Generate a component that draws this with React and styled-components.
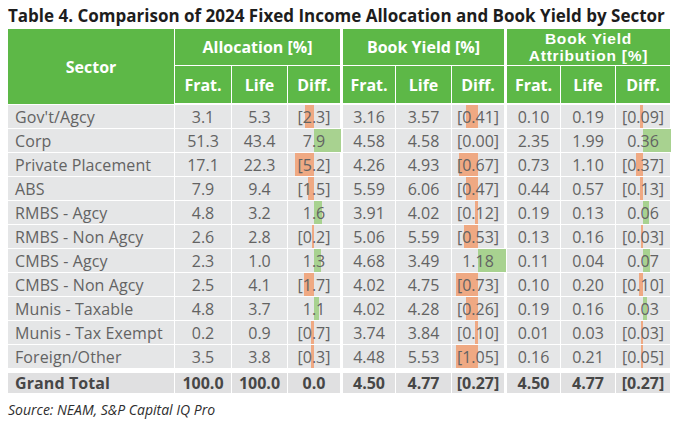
import React from 'react';
import styled, { createGlobalStyle } from 'styled-components';

const GlobalStyle = createGlobalStyle`
  html, body {
    margin: 0;
    padding: 0;
    background: #fff;
  }
  body {
    font-family: "Open Sans", "Liberation Sans", sans-serif;
  }
`;

const GREEN = '#5db847';

const Page = styled.div`
  width: 681px;
  height: 421px;
  padding: 4px 8px 0 8px;
  box-sizing: border-box;
  overflow: hidden;
`;

const Title = styled.h1`
  margin: 0;
  height: 25px;
  font-size: 17px;
  line-height: 24px;
  font-weight: 700;
  color: #1d1d1d;
  white-space: nowrap;
`;

const Header = styled.div`
  display: flex;
  gap: 1px;
  height: 75px;
`;

const SectorHead = styled.div`
  width: 166px;
  background: ${GREEN};
  color: #fff;
  font-weight: 700;
  font-size: 16px;
  display: flex;
  align-items: center;
  justify-content: center;
`;

const HeadGroup = styled.div`
  width: ${p => p.$w}px;
  margin-left: ${p => (p.$first ? 0 : 2)}px;
  display: flex;
  flex-direction: column;
  gap: 1px;
`;

const GroupTitle = styled.div`
  height: 36px;
  background: ${GREEN};
  color: #fff;
  font-weight: 700;
  font-size: 16px;
  text-align: center;
  display: flex;
  flex-direction: column;
  align-items: center;
  justify-content: center;
`;

/* tighter face for the two-line title so the lines sit close like the original */
const TitleLine = styled.div`
  font-family: ${p => (p.$tight ? '"Liberation Sans", Arial, sans-serif' : 'inherit')};
  font-size: ${p => (p.$tight ? 15.5 : 16)}px;
  letter-spacing: ${p => (p.$tight ? 0.8 : 0)}px;
  line-height: ${p => (p.$tight ? 17 : 22)}px;
  white-space: nowrap;
`;

const SubRow = styled.div`
  display: flex;
  gap: 1px;
  height: 37px;
`;

const SubHead = styled.div`
  width: ${p => p.$w}px;
  background: ${GREEN};
  color: #fff;
  font-weight: 700;
  font-size: 16px;
  display: flex;
  align-items: center;
  justify-content: center;
`;

const Body = styled.div`
  margin-top: 1px;
  display: flex;
  flex-direction: column;
  gap: 1px;
`;

const Row = styled.div`
  display: flex;
  gap: 1px;
  height: ${p => (p.$total ? 20 : 23)}px;
  margin-top: ${p => (p.$total ? 4 : 0)}px;
`;

const SectorCell = styled.div`
  width: 166px;
  box-sizing: border-box;
  padding-left: 7px;
  background: ${p => (p.$total ? '#e0e0e1' : '#e5e6e7')};
  color: ${p => (p.$total ? '#474747' : '#636363')};
  font-weight: ${p => (p.$total ? 700 : 400)};
  font-size: 16px;
  letter-spacing: 0.1px;
  display: flex;
  align-items: center;
  white-space: nowrap;
`;

const Group = styled.div`
  display: flex;
  gap: 1px;
  margin-left: ${p => (p.$first ? 0 : 2)}px;
`;

const Cell = styled.div`
  position: relative;
  width: ${p => p.$w}px;
  background: ${p => (p.$total ? '#e0e0e1' : '#e5e6e7')};
  color: ${p => (p.$total ? '#474747' : '#636363')};
  font-weight: ${p => (p.$total ? 700 : 400)};
  font-size: 16px;
  display: flex;
  align-items: center;
  justify-content: center;
  white-space: nowrap;
`;

const Bar = styled.div`
  position: absolute;
  top: 0;
  bottom: 0;
  background: ${p => (p.$neg ? '#efa983' : '#a8d290')};
`;

const CellText = styled.span`
  position: relative;
`;

const Source = styled.div`
  margin-top: 8px;
  font-size: 14px;
  line-height: 18px;
  font-style: italic;
  color: #2e2e2e;
`;

const groups = [
  { title: 'Allocation [%]', widths: [56, 55, 52] },
  { title: 'Book Yield [%]', widths: [52, 55, 52] },
  { title: 'Book Yield\nAttribution [%]', widths: [53, 54, 54] },
];

const rows = [
  ["Gov't/Agcy", ['3.1', '5.3', '[2.3]', -9], ['3.16', '3.57', '[0.41]', -12], ['0.10', '0.19', '[0.09]', -3]],
  ['Corp', ['51.3', '43.4', '7.9', 27], ['4.58', '4.58', '[0.00]', 0], ['2.35', '1.99', '0.36', 28]],
  ['Private Placement', ['17.1', '22.3', '[5.2]', -19], ['4.26', '4.93', '[0.67]', -19], ['0.73', '1.10', '[0.37]', -7]],
  ['ABS', ['7.9', '9.4', '[1.5]', -6], ['5.59', '6.06', '[0.47]', -12], ['0.44', '0.57', '[0.13]', -3]],
  ['RMBS - Agcy', ['4.8', '3.2', '1.6', 8], ['3.91', '4.02', '[0.12]', -3], ['0.19', '0.13', '0.06', 6]],
  ['RMBS - Non Agcy', ['2.6', '2.8', '[0.2]', -2], ['5.06', '5.59', '[0.53]', -14], ['0.13', '0.16', '[0.03]', -2]],
  ['CMBS - Agcy', ['2.3', '1.0', '1.3', 7], ['4.68', '3.49', '1.18', 28], ['0.11', '0.04', '0.07', 7]],
  ['CMBS - Non Agcy', ['2.5', '4.1', '[1.7]', -10], ['4.02', '4.75', '[0.73]', -22], ['0.10', '0.20', '[0.10]', -4]],
  ['Munis - Taxable', ['4.8', '3.7', '1.1', 5], ['4.02', '4.28', '[0.26]', -12], ['0.19', '0.16', '0.03', 4]],
  ['Munis - Tax Exempt', ['0.2', '0.9', '[0.7]', -3], ['3.74', '3.84', '[0.10]', -3], ['0.01', '0.03', '[0.03]', -2]],
  ['Foreign/Other', ['3.5', '3.8', '[0.3]', -3], ['4.48', '5.53', '[1.05]', -22], ['0.16', '0.21', '[0.05]', -2]],
];

const total = ['Grand Total', ['100.0', '100.0', '0.0'], ['4.50', '4.77', '[0.27]'], ['4.50', '4.77', '[0.27]']];

function DiffBar({ size }) {
  if (!size) return null;
  const neg = size < 0;
  const w = Math.abs(size);
  return (
    <Bar
      $neg={neg}
      style={neg ? { right: '50%', width: w } : { left: '50%', width: w }}
    />
  );
}

function DataRow({ data, isTotal }) {
  const [name, ...vals] = data;
  return (
    <Row $total={isTotal}>
      <SectorCell $total={isTotal}>{name}</SectorCell>
      {vals.map((g, gi) => (
        <Group key={gi} $first={gi === 0}>
          {[0, 1, 2].map(ci => (
            <Cell key={ci} $w={groups[gi].widths[ci]} $total={isTotal}>
              {ci === 2 && !isTotal && <DiffBar size={g[3]} />}
              <CellText>{g[ci]}</CellText>
            </Cell>
          ))}
        </Group>
      ))}
    </Row>
  );
}

export default function App() {
  return (
    <>
      <GlobalStyle />
      <Page>
        <Title>Table 4. Comparison of 2024 Fixed Income Allocation and Book Yield by Sector</Title>
        <Header>
          <SectorHead>Sector</SectorHead>
          {groups.map((g, gi) => {
            const lines = g.title.split('\n');
            return (
              <HeadGroup key={gi} $first={gi === 0} $w={g.widths.reduce((a, b) => a + b, 0) + 2}>
                <GroupTitle>
                  {lines.map((t, i) => (
                    <TitleLine key={i} $tight={lines.length > 1}>{t}</TitleLine>
                  ))}
                </GroupTitle>
                <SubRow>
                  {['Frat.', 'Life', 'Diff.'].map((s, si) => (
                    <SubHead key={s} $w={g.widths[si]}>{s}</SubHead>
                  ))}
                </SubRow>
              </HeadGroup>
            );
          })}
        </Header>
        <Body>
          {rows.map((r, i) => (
            <DataRow key={i} data={r} />
          ))}
          <DataRow data={total} isTotal />
        </Body>
        <Source>Source: NEAM, S&amp;P Capital IQ Pro</Source>
      </Page>
    </>
  );
}
